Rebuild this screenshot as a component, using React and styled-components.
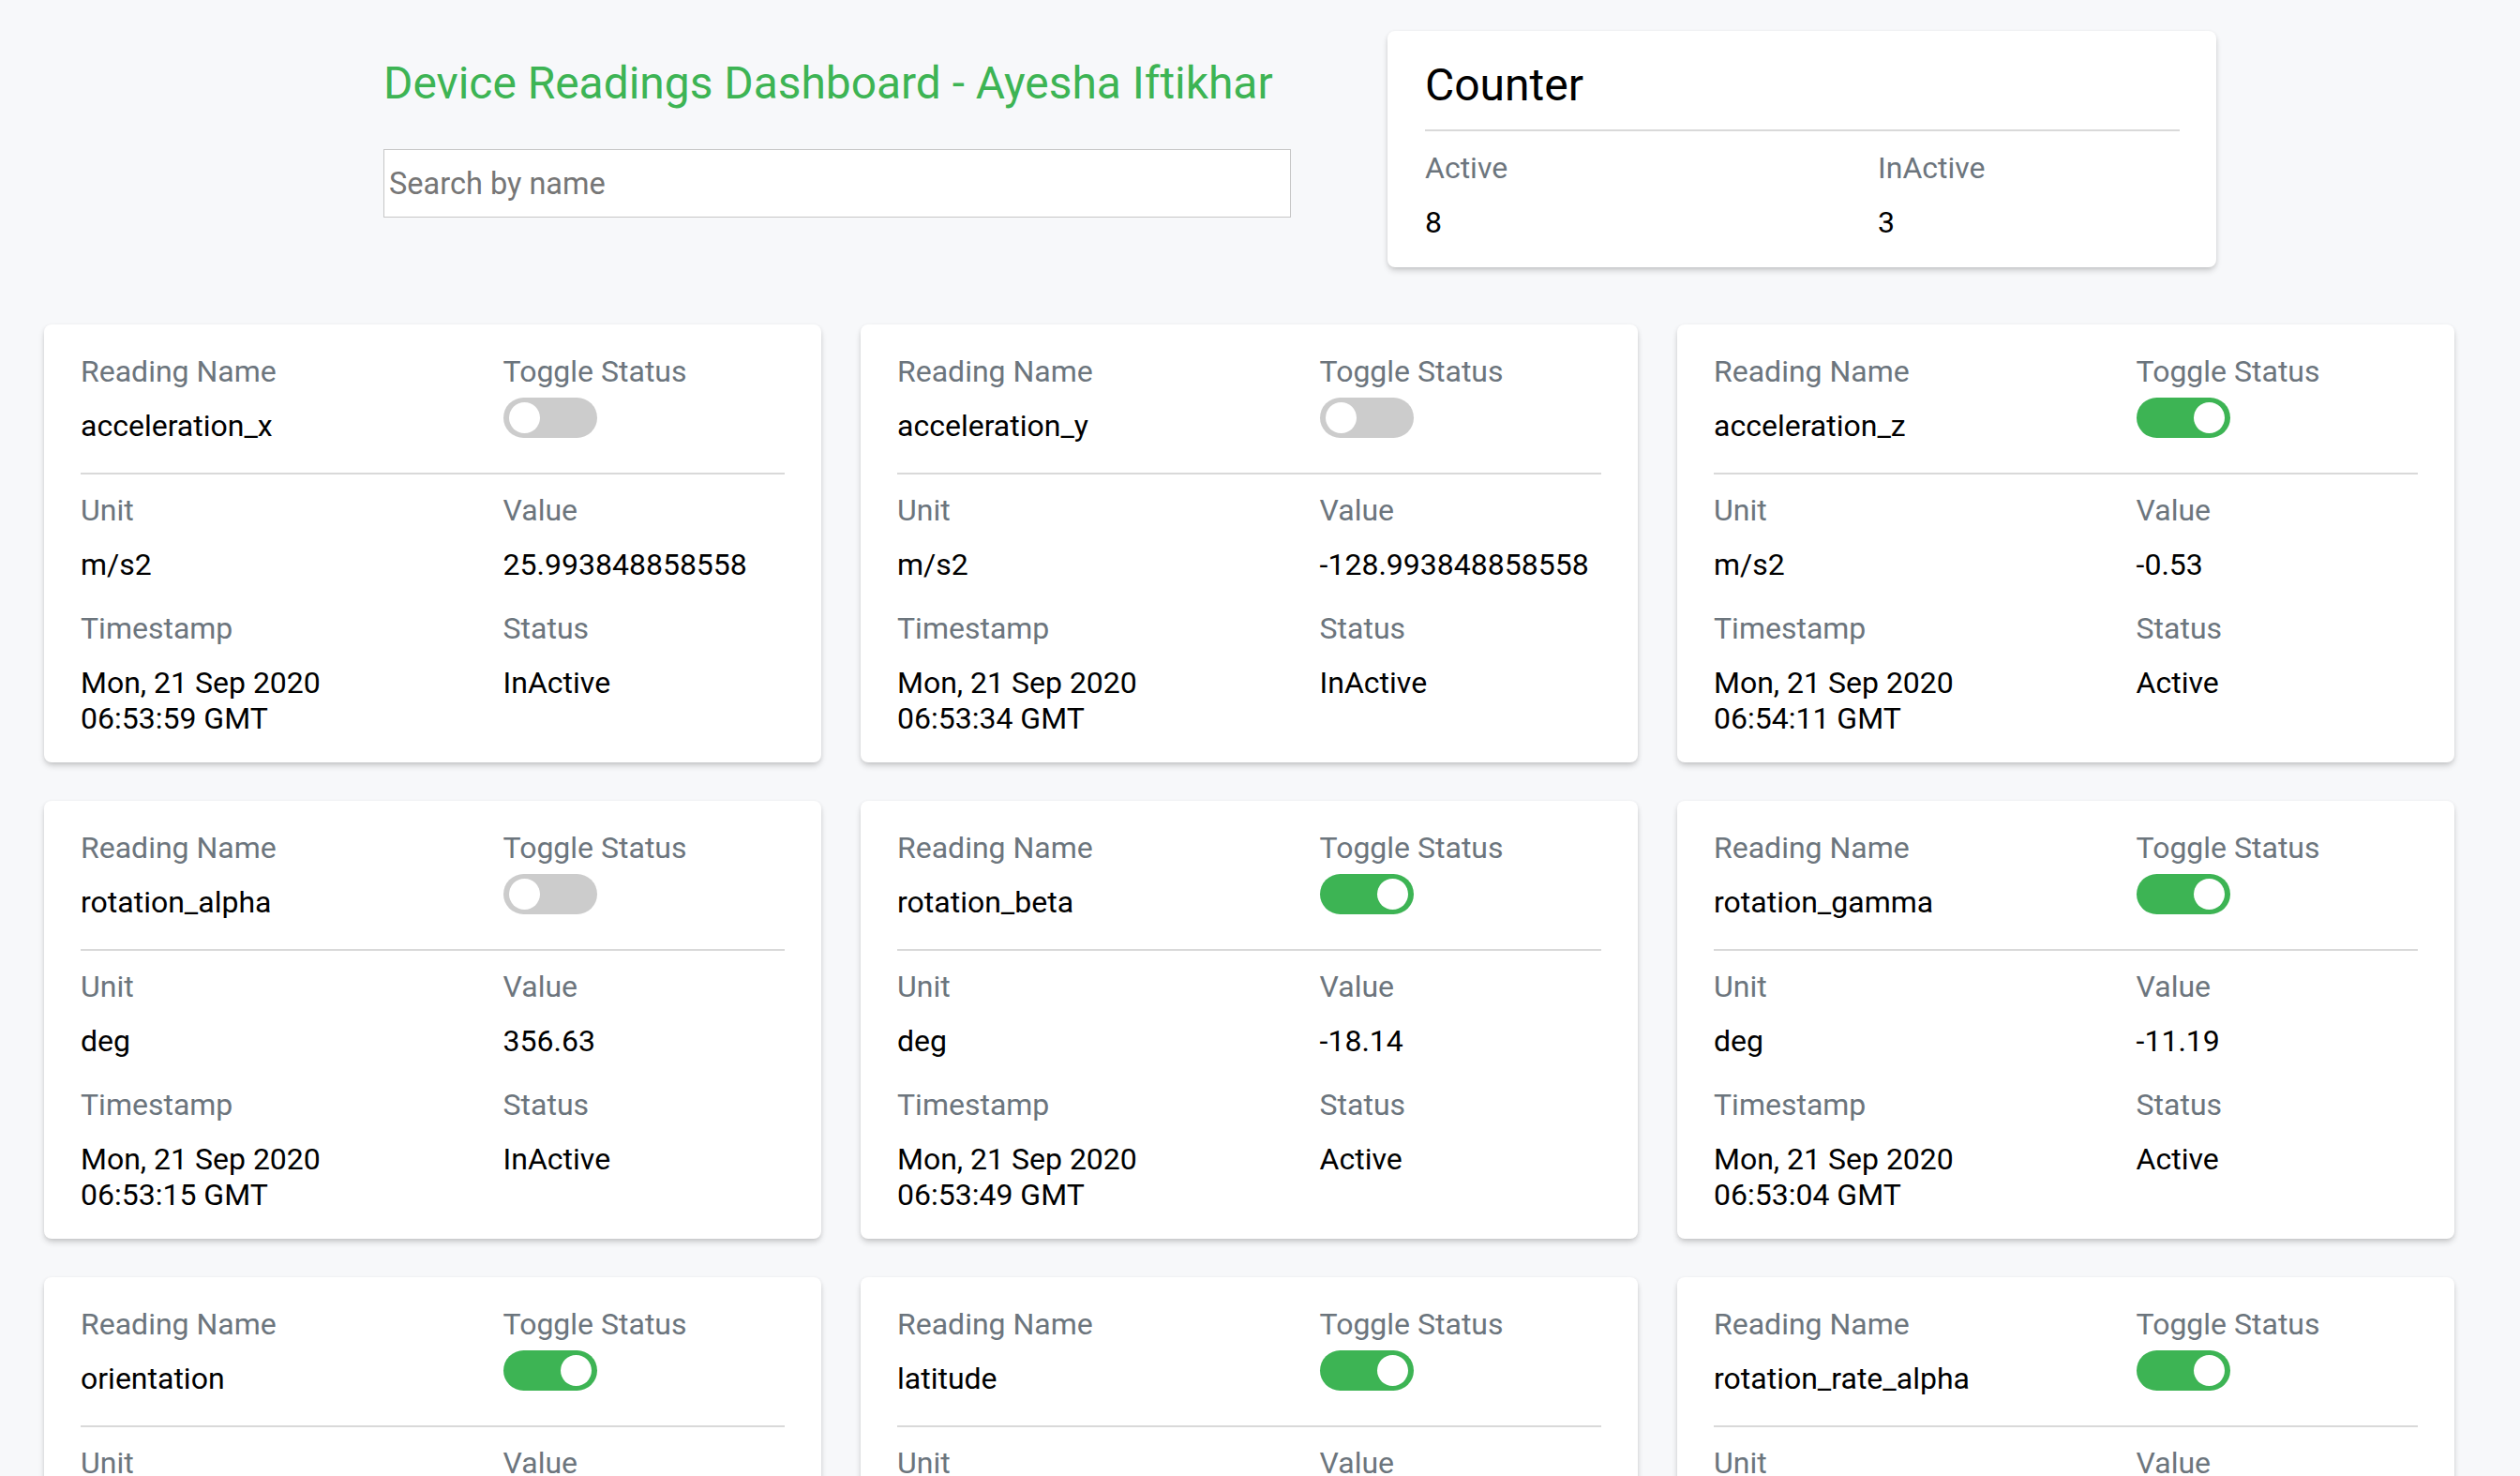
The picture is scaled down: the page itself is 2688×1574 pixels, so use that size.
import React, { useState } from "react";
import styled, { createGlobalStyle } from "styled-components";

const GlobalStyle = createGlobalStyle`
  html, body {
    margin: 0;
    padding: 0;
    background: #f7f8fa;
  }
  body {
    font-family: Roboto, "Liberation Sans", Arial, sans-serif;
    color: #111;
  }
  * { box-sizing: border-box; }
`;

const Page = styled.div`
  padding: 33px 70px 60px 47px;
  display: flex;
  flex-direction: column;
  gap: 61px;
`;

const Header = styled.header`
  display: flex;
  align-items: flex-start;
  gap: 103px;
  padding-left: 362px;
`;

const TitleBlock = styled.div`
  width: 968px;
  display: flex;
  flex-direction: column;
  gap: 41px;
  padding-top: 28px;
`;

const Title = styled.h1`
  margin: 0;
  font-size: 47.9px;
  line-height: 1.2;
  font-weight: 400;
  color: #3db454;
`;

const SearchInput = styled.input`
  width: 100%;
  height: 73px;
  border: 1px solid #c6c6c6;
  border-radius: 0;
  background: #fff;
  padding: 0 5px;
  font-family: inherit;
  font-size: 32.5px;
  color: #222;
  outline: none;
  &::placeholder {
    color: #767676;
  }
`;

const Panel = styled.section`
  background: #fff;
  border-radius: 8px;
  box-shadow: 0 4px 7px -1px rgba(0, 0, 0, 0.2), 0 1px 4px rgba(0, 0, 0, 0.06);
`;

const CounterPanel = styled(Panel)`
  width: 884px;
  padding: 29px 39px 29px 40px;
`;

const CounterTitle = styled.h2`
  margin: 0 0 18px;
  font-size: 48px;
  line-height: 1.2;
  font-weight: 400;
  color: #000;
`;

const Divider = styled.hr`
  margin: 0;
  border: 0;
  height: 2px;
  background: #d9d9d9;
`;

const FieldRow = styled.div`
  display: grid;
  grid-template-columns: 3fr 2fr;
  margin-top: ${(p) => p.$gap || 0}px;
`;

const Field = styled.div`
  display: flex;
  flex-direction: column;
  gap: ${(p) => (p.$tight ? 9 : 20)}px;
`;

const Label = styled.div`
  font-size: 32px;
  line-height: 38px;
  color: #6c757d;
`;

const Value = styled.div`
  font-size: 32px;
  line-height: 38px;
  color: #000;
`;

const Grid = styled.div`
  display: grid;
  grid-template-columns: repeat(3, 1fr);
  gap: 41px 42px;
`;

const Card = styled(Panel)`
  padding: 31px 39px 28px 39px;
`;

const Track = styled.button`
  width: 100px;
  height: 43px;
  border: 0;
  border-radius: 22px;
  padding: 0 6px;
  display: flex;
  align-items: center;
  justify-content: ${(p) => (p.$on ? "flex-end" : "flex-start")};
  background: ${(p) => (p.$on ? "#3db454" : "#cccccc")};
  cursor: pointer;
  transition: background 0.2s;
`;

const Knob = styled.span`
  width: 33px;
  height: 33px;
  border-radius: 50%;
  background: #fff;
`;

const initial = [
  { name: "acceleration_x", unit: "m/s2", value: "25.993848858558", date: "Mon, 21 Sep 2020", time: "06:53:59 GMT", active: false },
  { name: "acceleration_y", unit: "m/s2", value: "-128.993848858558", date: "Mon, 21 Sep 2020", time: "06:53:34 GMT", active: false },
  { name: "acceleration_z", unit: "m/s2", value: "-0.53", date: "Mon, 21 Sep 2020", time: "06:54:11 GMT", active: true },
  { name: "rotation_alpha", unit: "deg", value: "356.63", date: "Mon, 21 Sep 2020", time: "06:53:15 GMT", active: false },
  { name: "rotation_beta", unit: "deg", value: "-18.14", date: "Mon, 21 Sep 2020", time: "06:53:49 GMT", active: true },
  { name: "rotation_gamma", unit: "deg", value: "-11.19", date: "Mon, 21 Sep 2020", time: "06:53:04 GMT", active: true },
  { name: "orientation", unit: "deg", value: "0", date: "Mon, 21 Sep 2020", time: "06:53:21 GMT", active: true },
  { name: "latitude", unit: "deg", value: "31.5204", date: "Mon, 21 Sep 2020", time: "06:53:40 GMT", active: true },
  { name: "rotation_rate_alpha", unit: "deg/s", value: "0.12", date: "Mon, 21 Sep 2020", time: "06:53:55 GMT", active: true },
  { name: "longitude", unit: "deg", value: "74.3587", date: "Mon, 21 Sep 2020", time: "06:53:12 GMT", active: true },
  { name: "rotation_rate_beta", unit: "deg/s", value: "-0.07", date: "Mon, 21 Sep 2020", time: "06:54:02 GMT", active: true },
];

function Toggle({ on, onClick }) {
  return (
    <Track type="button" $on={on} onClick={onClick} aria-pressed={on}>
      <Knob />
    </Track>
  );
}

function ReadingCard({ reading, onToggle }) {
  return (
    <Card>
      <FieldRow>
        <Field>
          <Label>Reading Name</Label>
          <Value>{reading.name}</Value>
        </Field>
        <Field $tight>
          <Label>Toggle Status</Label>
          <Toggle on={reading.active} onClick={onToggle} />
        </Field>
      </FieldRow>
      <FieldRow $gap={31}>
        <div />
      </FieldRow>
      <Divider />
      <FieldRow $gap={19}>
        <Field>
          <Label>Unit</Label>
          <Value>{reading.unit}</Value>
        </Field>
        <Field>
          <Label>Value</Label>
          <Value>{reading.value}</Value>
        </Field>
      </FieldRow>
      <FieldRow $gap={30}>
        <Field>
          <Label>Timestamp</Label>
          <Value>
            {reading.date}
            <br />
            {reading.time}
          </Value>
        </Field>
        <Field>
          <Label>Status</Label>
          <Value>{reading.active ? "Active" : "InActive"}</Value>
        </Field>
      </FieldRow>
    </Card>
  );
}

export default function App() {
  const [readings, setReadings] = useState(initial);
  const [query, setQuery] = useState("");

  const activeCount = readings.filter((r) => r.active).length;
  const inactiveCount = readings.length - activeCount;
  const shown = readings.filter((r) =>
    r.name.toLowerCase().includes(query.trim().toLowerCase())
  );

  const toggle = (name) =>
    setReadings((list) =>
      list.map((r) => (r.name === name ? { ...r, active: !r.active } : r))
    );

  return (
    <>
      <GlobalStyle />
      <Page>
        <Header>
          <TitleBlock>
            <Title>Device Readings Dashboard - Ayesha Iftikhar</Title>
            <SearchInput
              placeholder="Search by name"
              value={query}
              onChange={(e) => setQuery(e.target.value)}
            />
          </TitleBlock>
          <CounterPanel>
            <CounterTitle>Counter</CounterTitle>
            <Divider />
            <FieldRow $gap={20}>
              <Field>
                <Label>Active</Label>
                <Value>{activeCount}</Value>
              </Field>
              <Field>
                <Label>InActive</Label>
                <Value>{inactiveCount}</Value>
              </Field>
            </FieldRow>
          </CounterPanel>
        </Header>
        <Grid>
          {shown.map((r) => (
            <ReadingCard key={r.name} reading={r} onToggle={() => toggle(r.name)} />
          ))}
        </Grid>
      </Page>
    </>
  );
}
